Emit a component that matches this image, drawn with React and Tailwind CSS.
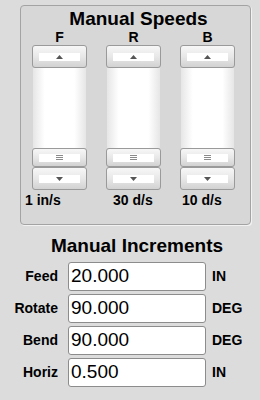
import React from 'react';

const font = { fontFamily: '"Liberation Sans", Arial, sans-serif' };

function SliderButton({ children, h }) {
  return (
    <div
      className={`${h} w-full rounded-[3px] border border-[#9a9a9a] bg-gradient-to-b from-[#f7f7f7] via-[#e8e8e8] to-[#d2d2d2] flex items-center px-[6px]`}
    >
      <div className="h-[8px] w-full bg-white flex items-center justify-center">
        {children}
      </div>
    </div>
  );
}

const Up = () => (
  <svg width="7" height="4" viewBox="0 0 7 4"><path d="M3.5 0 L7 4 L0 4 Z" fill="#555" /></svg>
);
const Down = () => (
  <svg width="7" height="4" viewBox="0 0 7 4"><path d="M0 0 L7 0 L3.5 4 Z" fill="#555" /></svg>
);
const Grip = () => (
  <svg width="7" height="6" viewBox="0 0 7 6">
    <path d="M0 0.5 H7 M0 2.5 H7 M0 4.5 H7" stroke="#8a8a8a" strokeWidth="1" />
  </svg>
);

function Slider() {
  return (
    <div className="w-[55px] flex flex-col">
      <SliderButton h="h-[23px]"><Up /></SliderButton>
      <div className="h-[80px] mx-[1px] bg-[linear-gradient(to_right,#e6e6e6,#ffffff_22%,#ffffff_78%,#e6e6e6)]" />
      <SliderButton h="h-[19px]"><Grip /></SliderButton>
      <SliderButton h="h-[23px]"><Down /></SliderButton>
    </div>
  );
}

const rows = [
  { label: 'Feed', value: '20.000', unit: 'IN' },
  { label: 'Rotate', value: '90.000', unit: 'DEG' },
  { label: 'Bend', value: '90.000', unit: 'DEG' },
  { label: 'Horiz', value: '0.500', unit: 'IN' },
];

export default function App() {
  return (
    <div className="w-[260px] h-[400px] bg-[#dcdcdc] overflow-hidden text-black" style={font}>
      {/* Manual Speeds */}
      <div className="ml-[20px] mt-[5px] w-[231px] h-[220px] rounded-[4px] border border-[#a3a3a3] bg-[#d7d7d7] shadow-[1px_1px_0_#f2f2f2] flex flex-col">
        <div className="pt-[2px] h-[24px] leading-[22px] text-[19px] font-bold text-center pl-[6px]">Manual Speeds</div>
        <div className="flex pl-[11px] gap-[19px]">
          {['F', 'R', 'B'].map((l) => (
            <div key={l} className="flex flex-col w-[55px]">
              <div className="h-[15px] leading-[15px] text-[14px] font-bold text-center">{l}</div>
              <Slider />
            </div>
          ))}
        </div>
        <div className="flex mt-[3px] h-[15px] leading-[15px] text-[14px] font-bold">
          <span className="ml-[4px] w-[88px]">1 in/s</span>
          <span className="w-[69px]">30 d/s</span>
          <span>10 d/s</span>
        </div>
      </div>

      {/* Manual Increments */}
      <div className="mt-[10px] h-[22px] leading-[22px] text-[19px] font-bold text-center pl-[14px]">Manual Increments</div>
      <div className="mt-[5px] flex flex-col gap-[3px]">
        {rows.map((r) => (
          <div key={r.label} className="flex items-center h-[29px]">
            <div className="w-[58px] text-right text-[14px] font-bold">{r.label}</div>
            <div className="ml-[10px] w-[138px] h-[29px] bg-white border border-[#8c8c8c] rounded-[3px] flex items-center pl-[2px] text-[19px]">
              {r.value}
            </div>
            <div className="ml-[6px] text-[14px] font-bold">{r.unit}</div>
          </div>
        ))}
      </div>
    </div>
  );
}
